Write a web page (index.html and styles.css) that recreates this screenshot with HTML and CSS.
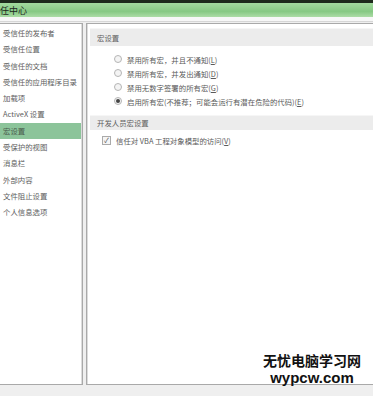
FILE: index.html
```html
<!DOCTYPE html>
<html>
<head>
<meta charset="utf-8">
<link rel="stylesheet" href="styles.css">
</head>
<body>
<div class="titlebar"><span class="title">任中心</span></div>
<div class="gap"></div>
<div class="main">
  <ul class="nav">
    <li>受信任的发布者</li>
    <li>受信任位置</li>
    <li>受信任的文档</li>
    <li>受信任的应用程序目录</li>
    <li>加载项</li>
    <li>ActiveX 设置</li>
    <li class="sel">宏设置</li>
    <li>受保护的视图</li>
    <li>消息栏</li>
    <li>外部内容</li>
    <li>文件阻止设置</li>
    <li>个人信息选项</li>
  </ul>
  <div class="content">
    <div class="band">宏设置</div>
    <div class="radios">
      <div class="row"><span class="radio"></span>禁用所有宏，并且不通知(<u>L</u>)</div>
      <div class="row"><span class="radio"></span>禁用所有宏，并发出通知(<u>D</u>)</div>
      <div class="row"><span class="radio"></span>禁用无数字签署的所有宏(<u>G</u>)</div>
      <div class="row"><span class="radio on"></span>启用所有宏(不推荐；可能会运行有潜在危险的代码)(<u>E</u>)</div>
    </div>
    <div class="band band2">开发人员宏设置</div>
    <div class="check-row"><span class="check">✓</span>信任对 VBA 工程对象模型的访问(<u>V</u>)</div>
  </div>
</div>
<div class="watermark">
  <div class="wm1">无忧电脑学习网</div>
  <div class="wm2">wypcw.com</div>
</div>
</body>
</html>
```
FILE: styles.css
```css
html, body {
  margin: 0;
  padding: 0;
}
body {
  width: 373px;
  height: 396px;
  background: #efefef;
  font-family: "Noto Sans CJK SC", "Noto Sans", sans-serif;
  font-size: 7.4px;
  color: #555;
  position: relative;
  overflow: hidden;
}
.titlebar {
  height: 14px;
  border-top: 3px solid #1d2a1c;
  background: linear-gradient(to bottom, #a3da9f 0%, #86c983 60%, #acdca6 100%);
  display: flex;
  align-items: center;
}
.title {
  font-size: 9px;
  color: #1e261e;
}
.gap {
  height: 4px;
  background: #f7f7f7;
  border-bottom: 1px solid #d6d6d6;
}
.main {
  display: flex;
  gap: 3px;
  height: 362px;
  padding-top: 1px;
}
.nav {
  list-style: none;
  margin: 0;
  padding: 1px 0 0 0;
  width: 82px;
  background: #fff;
  border: 1px solid #a9a9a9;
  border-left: none;
  box-shadow: inset -1px 0 0 #dcdcdc;
}
.nav li {
  height: 16.3px;
  line-height: 16.3px;
  padding-left: 3px;
  white-space: nowrap;
  color: #5e5e5e;
}
.nav li.sel {
  background: #8cc49a;
  margin-right: 1px;
  color: #4a5a4c;
}
.content {
  flex: 1;
  background: #fff;
  border: 1px solid #a9a9a9;
  border-right: none;
  box-shadow: inset 1px 0 0 #dcdcdc;
  padding: 4px 0 0 3px;
}
.band {
  height: 17px;
  line-height: 17px;
  background: #ececec;
  border-top: 1px solid #f6f6f6;
  padding-left: 7px;
  color: #5e5e5e;
}
.radios {
  padding: 6px 0 0 24px;
  display: flex;
  flex-direction: column;
}
.row {
  height: 14px;
  display: flex;
  align-items: center;
  white-space: nowrap;
  color: #5a5a5a;
}
.radio {
  width: 6px;
  height: 6px;
  border: 1px solid #b5b5b5;
  border-radius: 50%;
  background: #f4f4f4;
  margin-right: 5px;
  flex: none;
  display: flex;
  align-items: center;
  justify-content: center;
}
.radio.on::after {
  content: "";
  width: 4px;
  height: 4px;
  border-radius: 50%;
  background: #444;
}
.band2 {
  margin-top: 7px;
  height: 14px;
  line-height: 14px;
}
.check-row {
  display: flex;
  align-items: center;
  padding: 5px 0 0 12px;
  white-space: nowrap;
  color: #5a5a5a;
}
.check {
  width: 7px;
  height: 7px;
  border: 1px solid #aaa;
  margin-right: 5px;
  font-size: 7px;
  line-height: 7px;
  text-align: center;
  color: #555;
  background: #f5f5f5;
}
.watermark {
  position: absolute;
  left: 262px;
  top: 350px;
  width: 100px;
  text-align: center;
  font-weight: bold;
  color: #111;
}
.wm1 {
  font-family: "Noto Sans CJK SC", sans-serif;
  font-size: 14px;
  line-height: 20px;
}
.wm2 {
  font-family: "Liberation Sans", Arial, sans-serif;
  font-size: 15px;
  line-height: 15px;
}
```
